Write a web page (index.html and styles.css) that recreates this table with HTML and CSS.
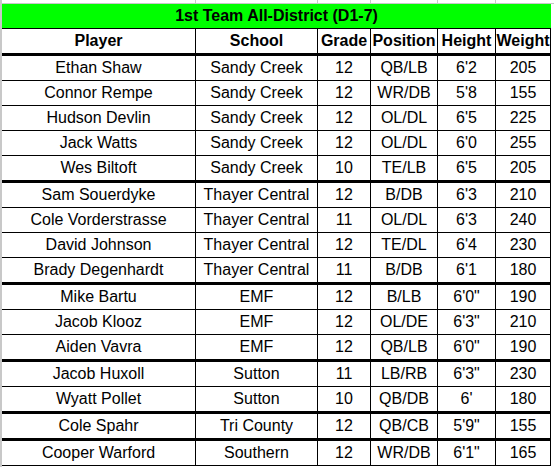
FILE: index.html
```html
<!DOCTYPE html>
<html>
<head>
<meta charset="utf-8">
<link rel="stylesheet" href="styles.css">
</head>
<body>
<div class="sheet">
  <div class="strip">
    <div class="gcell"></div><div class="gcell"></div><div class="gcell"></div><div class="gcell"></div><div class="gcell"></div><div class="gcell last"></div>
  </div>
  <div class="table">
    <div class="title">1st Team All-District (D1-7)</div>
    <div class="row head sep"><div class="cell">Player</div><div class="cell">School</div><div class="cell">Grade</div><div class="cell">Position</div><div class="cell">Height</div><div class="cell">Weight</div></div>

    <div class="row"><div class="cell">Ethan Shaw</div><div class="cell">Sandy Creek</div><div class="cell">12</div><div class="cell">QB/LB</div><div class="cell">6'2</div><div class="cell">205</div></div>
    <div class="row"><div class="cell">Connor Rempe</div><div class="cell">Sandy Creek</div><div class="cell">12</div><div class="cell">WR/DB</div><div class="cell">5'8</div><div class="cell">155</div></div>
    <div class="row"><div class="cell">Hudson Devlin</div><div class="cell">Sandy Creek</div><div class="cell">12</div><div class="cell">OL/DL</div><div class="cell">6'5</div><div class="cell">225</div></div>
    <div class="row"><div class="cell">Jack Watts</div><div class="cell">Sandy Creek</div><div class="cell">12</div><div class="cell">OL/DL</div><div class="cell">6'0</div><div class="cell">255</div></div>
    <div class="row sep"><div class="cell">Wes Biltoft</div><div class="cell">Sandy Creek</div><div class="cell">10</div><div class="cell">TE/LB</div><div class="cell">6'5</div><div class="cell">205</div></div>

    <div class="row"><div class="cell">Sam Souerdyke</div><div class="cell">Thayer Central</div><div class="cell">12</div><div class="cell">B/DB</div><div class="cell">6'3</div><div class="cell">210</div></div>
    <div class="row"><div class="cell">Cole Vorderstrasse</div><div class="cell">Thayer Central</div><div class="cell">11</div><div class="cell">OL/DL</div><div class="cell">6'3</div><div class="cell">240</div></div>
    <div class="row"><div class="cell">David Johnson</div><div class="cell">Thayer Central</div><div class="cell">12</div><div class="cell">TE/DL</div><div class="cell">6'4</div><div class="cell">230</div></div>
    <div class="row sep"><div class="cell">Brady Degenhardt</div><div class="cell">Thayer Central</div><div class="cell">11</div><div class="cell">B/DB</div><div class="cell">6'1</div><div class="cell">180</div></div>

    <div class="row"><div class="cell">Mike Bartu</div><div class="cell">EMF</div><div class="cell">12</div><div class="cell">B/LB</div><div class="cell">6'0"</div><div class="cell">190</div></div>
    <div class="row"><div class="cell">Jacob Klooz</div><div class="cell">EMF</div><div class="cell">12</div><div class="cell">OL/DE</div><div class="cell">6'3"</div><div class="cell">210</div></div>
    <div class="row sep"><div class="cell">Aiden Vavra</div><div class="cell">EMF</div><div class="cell">12</div><div class="cell">QB/LB</div><div class="cell">6'0"</div><div class="cell">190</div></div>

    <div class="row"><div class="cell">Jacob Huxoll</div><div class="cell">Sutton</div><div class="cell">11</div><div class="cell">LB/RB</div><div class="cell">6'3"</div><div class="cell">230</div></div>
    <div class="row sep"><div class="cell">Wyatt Pollet</div><div class="cell">Sutton</div><div class="cell">10</div><div class="cell">QB/DB</div><div class="cell">6'</div><div class="cell">180</div></div>

    <div class="row sep"><div class="cell">Cole Spahr</div><div class="cell">Tri County</div><div class="cell">12</div><div class="cell">QB/CB</div><div class="cell">5'9"</div><div class="cell">155</div></div>

    <div class="row"><div class="cell">Cooper Warford</div><div class="cell">Southern</div><div class="cell">12</div><div class="cell">WR/DB</div><div class="cell">6'1"</div><div class="cell">165</div></div>
  </div>
</div>
</body>
</html>
```
FILE: styles.css
```css
html, body {
  margin: 0;
  padding: 0;
  background: #ffffff;
}

.sheet {
  height: 467px;
  border-left: 2px solid #c8c8c8;
  box-sizing: border-box;
  overflow: hidden;
  font-family: "Liberation Sans", Arial, sans-serif;
  font-size: 16px;
  color: #000000;
}

.strip {
  display: grid;
  grid-template-columns: 194px 122px 53px 67px 58px 1fr;
  height: 3px;
  border-bottom: 1px solid #c8c8c8;
}

.gcell {
  border-right: 1px solid #c8c8c8;
}

.gcell.last {
  border-right: none;
}

.table {
  width: 549px;
}

.title {
  height: 24px;
  line-height: 24px;
  background: #00ff00;
  font-weight: bold;
  text-align: center;
  border-bottom: 1px solid #000000;
  white-space: nowrap;
}

.row {
  display: grid;
  grid-template-columns: 194px 122px 53px 67px 58px 55px;
  border-bottom: 1px solid #000000;
}

.row.sep {
  border-bottom-width: 3px;
}

.row.head {
  font-weight: bold;
}

.cell {
  height: 24px;
  line-height: 24px;
  text-align: center;
  white-space: nowrap;
  overflow: hidden;
  border-right: 1px solid #000000;
}
```
